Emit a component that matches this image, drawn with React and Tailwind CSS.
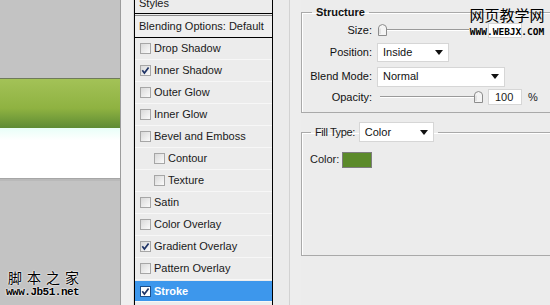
import React from 'react';

const rows = [
  { label: 'Drop Shadow' },
  { label: 'Inner Shadow', checked: true },
  { label: 'Outer Glow' },
  { label: 'Inner Glow' },
  { label: 'Bevel and Emboss' },
  { label: 'Contour', sub: true },
  { label: 'Texture', sub: true },
  { label: 'Satin' },
  { label: 'Color Overlay' },
  { label: 'Gradient Overlay', checked: true },
  { label: 'Pattern Overlay' },
  { label: 'Stroke', checked: true, active: true },
];

const Check = ({ checked, active }) => (
  <span
    className={`w-[11px] h-[11px] border flex items-center justify-center shrink-0 ${
      active ? 'border-[#1d4f8a] bg-white' : 'border-[#a6a6a6] bg-gradient-to-br from-[#d9d9d9] to-[#fbfbfb]'
    }`}
  >
    {checked && (
      <svg width="9" height="9" viewBox="0 0 9 9">
        <path d="M1.3 4.3 L3.4 7 L7.6 1.4" fill="none" stroke="#1f3466" strokeWidth="1.7" />
      </svg>
    )}
  </span>
);

const Dropdown = ({ value, width }) => (
  <div className={`${width} h-full bg-white border border-[#d6d6d6] flex items-center justify-between pl-[5px] pr-[5px]`}>
    <span className="text-[11px] text-[#111]">{value}</span>
    <svg width="8" height="5" viewBox="0 0 8 5">
      <path d="M0 0 H8 L4 5 Z" fill="#111" />
    </svg>
  </div>
);

const Thumb = () => (
  <svg width="9" height="12" viewBox="0 0 9 12">
    <path d="M0.5 11.5 V4 Q0.5 1 4.5 0.5 Q8.5 1 8.5 4 V11.5 Z" fill="#f4f4f4" stroke="#8c8c8c" />
    <path d="M2 10 V4.5" stroke="#d0d0d0" />
  </svg>
);

const Slider = ({ width, pos }) => (
  <div className={`relative ${width} h-[12px]`}>
    <div className="absolute left-[3px] right-0 top-[5px] h-[2px] border-t border-[#9a9a9a] border-b border-b-white" />
    <div className="absolute top-0" style={{ left: pos }}>
      <Thumb />
    </div>
  </div>
);

const Row = ({ label, children, h }) => (
  <div className={`flex items-center gap-[5px] ${h}`}>
    <span className="w-[70px] text-right text-[11px] text-[#111]">{label}</span>
    {children}
  </div>
);

export default function App() {
  return (
    <div className="w-[550px] h-[305px] flex overflow-hidden relative bg-[#ececec] font-['Liberation_Sans',Arial,sans-serif] text-[11px] text-[#1a1a1a]">
      {/* canvas area */}
      <div className="w-[120px] shrink-0 flex flex-col bg-[#c3c3c3]">
        <div className="h-[78px]" />
        <div className="h-[1px] bg-[#6f7b59]" />
        <div className="h-[49px] bg-gradient-to-b from-[#a3c257] via-[#8fb241] via-60% to-[#5e8c35]" />
        <div className="h-[50px] bg-gradient-to-b from-[#e8fff8] via-white via-25% to-white" />
        <div className="h-[1px] bg-[#a6a6a6]" />
        <div className="h-[2px] bg-[#b9b9b9]" />
        <div className="flex-1 flex flex-col justify-end pl-[6px] pb-[6px]">
          <div className="font-['Noto_Sans_CJK_SC',sans-serif] text-[14px] leading-[16px] tracking-[5px] text-black pl-[2px] [text-shadow:0_0_2px_#fff,0_0_2px_#fff]">
            脚本之家
          </div>
          <div className="font-['Liberation_Mono',monospace] text-[11px] leading-[14px] font-bold text-black tracking-[-0.5px] [text-shadow:0_0_2px_#fff,0_0_2px_#fff]">
            www.Jb51.net
          </div>
        </div>
      </div>
      <div className="w-[1px] shrink-0 bg-[#9c9c9c]" />
      <div className="w-[13px] shrink-0 bg-[#efefef] border-r border-[#dcdcdc]" />

      {/* styles list */}
      <div className="w-[139px] shrink-0 border-x border-black bg-[#ececec] flex flex-col">
        <div className="h-[14px] border-b border-black overflow-hidden pl-[4px]">
          <div className="-mt-[5px] text-[11px]">Styles</div>
        </div>
        <div className="h-[23px] border-t border-[#8a8a8a] mt-[1px] border-b border-b-black flex items-center pl-[4px] bg-[#efefef]">
          Blending Options: Default
        </div>
        {rows.map((r) => (
          <div key={r.label} className="h-[22px] border-b border-[#f7f7f7] flex flex-col">
            <div
              className={`flex-1 flex items-center gap-[3px] ${r.sub ? 'pl-[19px]' : 'pl-[5px]'} ${
                r.active ? 'bg-[#3d97ec] text-white font-bold mt-[1px]' : 'bg-[#ececec]'
              }`}
            >
              <Check checked={r.checked} active={r.active} />
              <span>{r.label}</span>
            </div>
          </div>
        ))}
      </div>

      {/* options panel */}
      <div className="w-[16px] shrink-0 bg-[#ebebeb]" />
      <div className="w-[1px] shrink-0 bg-[#d2d2d2]" />
      <div className="w-[11px] shrink-0 bg-[#ededed]" />
      <div className="w-[260px] shrink-0 flex flex-col">
        <fieldset className="mt-[5px] border border-[#a9a9a9] shadow-[inset_1px_1px_0_#fff]">
          <legend className="ml-[10px] px-[4px] font-bold text-[11px] leading-[14px] text-[#111]">Structure</legend>
          <div className="flex flex-col pb-[7px]">
            <Row label="Size:" h="h-[22px]">
              <Slider width="w-[92px]" pos="1px" />
              <div className="ml-[14px] w-[34px] h-[15px] bg-white border border-[#d6d6d6]" />
            </Row>
            <Row label="Position:" h="h-[23px]">
              <div className="h-[19px]">
                <Dropdown value="Inside" width="w-[72px]" />
              </div>
            </Row>
            <Row label="Blend Mode:" h="h-[25px]">
              <div className="h-[20px]">
                <Dropdown value="Normal" width="w-[128px]" />
              </div>
            </Row>
            <Row label="Opacity:" h="h-[16px]">
              <Slider width="w-[106px]" pos="97px" />
              <div className="w-[34px] h-[16px] bg-white border border-[#d6d6d6] pl-[6px] text-[11px] leading-[14px]">100</div>
              <span className="ml-[1px]">%</span>
            </Row>
          </div>
        </fieldset>

        <fieldset className="mt-[9px] border border-[#a9a9a9] shadow-[inset_1px_1px_0_#fff]">
          <legend className="ml-[9px] px-[4px] flex items-center gap-[4px] h-[20px]">
            <span className="text-[11px] tracking-[-0.4px]">Fill Type:</span>
            <Dropdown value="Color" width="w-[75px]" />
          </legend>
          <div className="h-[113px] pl-[8px] pt-[9px]">
            <div className="flex items-center gap-[3px] h-[17px]">
              <span>Color:</span>
              <span className="w-[30px] h-[16px] bg-[#5b8a2a] border border-[#7d7d7d]" />
            </div>
          </div>
        </fieldset>
      </div>

      {/* watermark */}
      <div className="absolute left-[468px] top-[6px] w-[78px] flex flex-col items-center">
        <span className="font-['Noto_Sans_CJK_SC',sans-serif] text-[15px] leading-[18px] text-black">网页教学网</span>
        <span className="mt-[2px] font-['DejaVu_Sans_Mono',monospace] font-bold text-[9.5px] leading-[11px] text-black">WWW.WEBJX.COM</span>
      </div>
    </div>
  );
}
